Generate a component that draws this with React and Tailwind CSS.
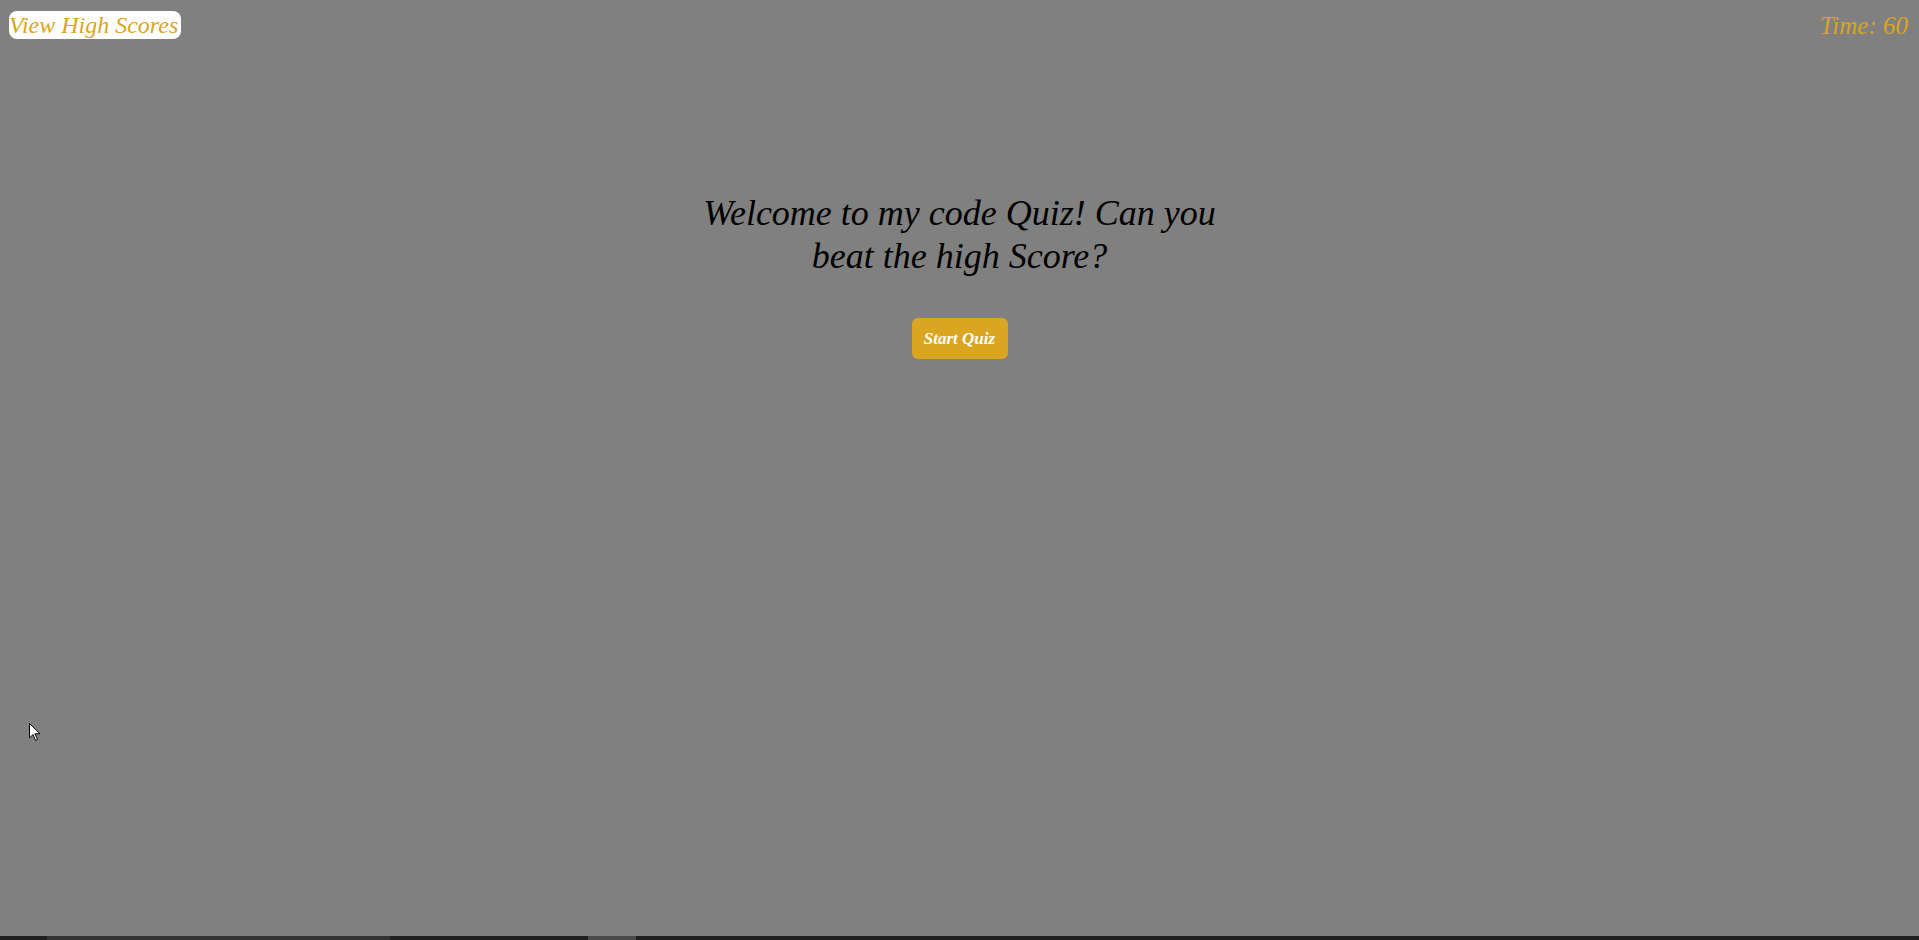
export default function App() {
    return (
        <div
            className="relative h-[940px] w-full bg-[#808080] flex flex-col overflow-hidden"
            style={{ fontFamily: '"Liberation Serif", serif' }}
        >
            <header className="flex justify-between items-start px-[9px] pt-[11px]">
                <button className="bg-white text-[#daa520] italic text-[24px] leading-[28px] rounded-[8px] w-[172px] text-left">
                    View High Scores
                </button>
                <div className="text-[#daa520] italic text-[25px] leading-[28px] mr-[2px] mt-[1px]">
                    Time: 60
                </div>
            </header>

            <main className="flex flex-col items-center flex-1">
                <h1 className="mt-[152px] w-[540px] text-center italic text-black text-[36px] leading-[43px]">
                    Welcome to my code Quiz! Can you beat the high Score?
                </h1>
                <button className="mt-[40px] w-[96px] h-[41px] rounded-[6px] bg-[#daa520] text-white italic font-bold text-[17px]">
                    Start Quiz
                </button>
            </main>

            <div className="h-[4px] bg-[#202020] flex">
                <div className="w-[47px]"></div>
                <div className="w-[343px] bg-[#333]"></div>
                <div className="w-[198px]"></div>
                <div className="w-[48px] bg-[#4a4a4a]"></div>
            </div>

            {/* mouse pointer */}
            <svg className="absolute left-[29px] top-[723px]" width="12" height="19" viewBox="0 0 12 19">
                <path d="M0.5 0.5 L0.5 15 L4 11.5 L6.5 17.5 L8.5 16.5 L6 10.8 L11 10.8 Z" fill="white" stroke="black" strokeWidth="1" />
            </svg>
        </div>
    );
}
